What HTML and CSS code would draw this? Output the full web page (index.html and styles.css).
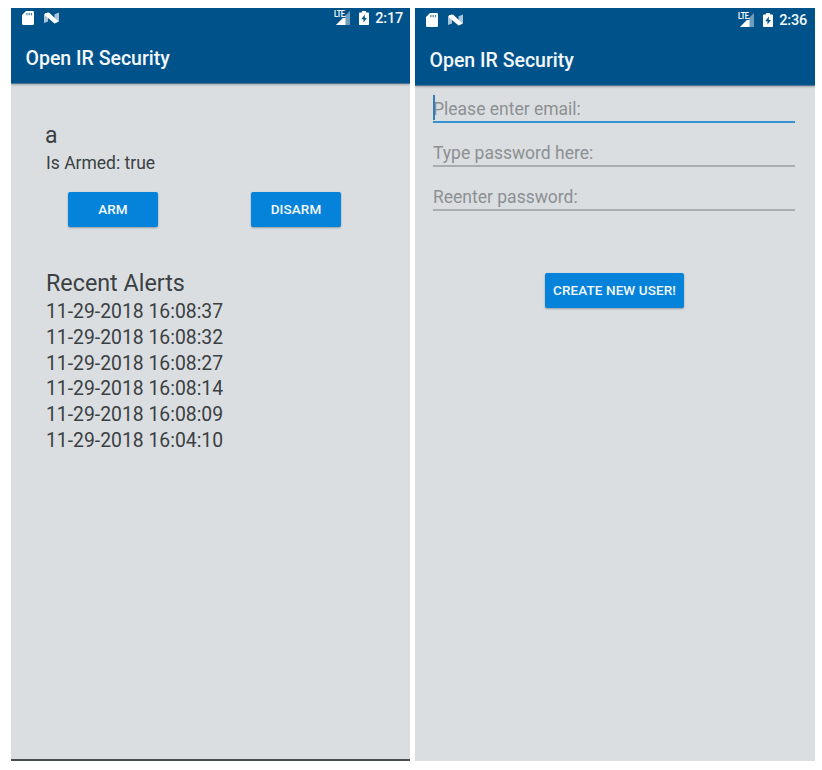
FILE: index.html
```
<!DOCTYPE html>
<html lang="en">
<head>
<meta charset="utf-8">
<title>Open IR Security</title>
<link rel="stylesheet" href="styles.css">
</head>
<body>
<svg class="symbols" aria-hidden="true">
  <symbol id="sd" viewBox="0 0 12 14"><path fill="#fff" d="M4 0h6.800a1.200 1.200 0 0 1 1.200 1.200v11.600a1.200 1.200 0 0 1-1.200 1.200H1.200A1.200 1.200 0 0 1 0 12.800V4z"/><path fill="#00538a" fill-opacity=".75" d="M4.300 2h1.200v2.300H4.300zM6.600 2h1.200v2.300H6.600zM8.900 2h1.200v2.300H8.900z"/></symbol>
  <symbol id="nougat" viewBox="0 0 15 12"><path fill="#a8c5da" d="M0 2l4-1.500v9L0 11zM10.500 2.200L15 .5v9l-4.500 2z"/><path fill="#fff" d="M1 1.200L5 .5L14.500 9.500L10.500 11.500L1 3.500z"/></symbol>
  <symbol id="signal" viewBox="0 0 18 16"><path fill="#6e9dbd" d="M17 1v14H3z"/><path fill="#fff" d="M12.500 5.500V15H3z"/></symbol>
  <symbol id="battery" viewBox="0 0 10 14"><path fill="#fff" d="M3 0h4v1.500h2.300q.7 0 .7.700v11.100q0 .7-.7.700H.7q-.7 0-.7-.7V2.200q0-.7.700-.7H3z"/><path fill="#00538a" d="M5.800 3.500L2.300 8.200h2.200v3.300L7.900 7H5.800z"/></symbol>
</svg>
<main class="screens">
  <section class="phone phone-home">
    <header class="app-header">
      <div class="status">
        <svg class="sd"><use href="#sd"/></svg>
        <svg class="nougat"><use href="#nougat"/></svg>
        <span class="network"><svg class="signal"><use href="#signal"/></svg><span class="lte">LTE</span></span>
        <svg class="battery"><use href="#battery"/></svg>
        <span class="clock">2:17</span>
      </div>
      <h1>Open IR Security</h1>
    </header>
    <div class="home">
      <h2 class="device">a</h2>
      <p class="armed">Is Armed: true</p>
      <div class="actions">
        <button type="button">ARM</button>
        <button type="button">DISARM</button>
      </div>
      <h2 class="alerts-title">Recent Alerts</h2>
      <ul class="alerts">
        <li>11-29-2018 16:08:37</li>
        <li>11-29-2018 16:08:32</li>
        <li>11-29-2018 16:08:27</li>
        <li>11-29-2018 16:08:14</li>
        <li>11-29-2018 16:08:09</li>
        <li>11-29-2018 16:04:10</li>
      </ul>
    </div>
  </section>
  <section class="phone phone-signup">
    <header class="app-header">
      <div class="status">
        <svg class="sd"><use href="#sd"/></svg>
        <svg class="nougat"><use href="#nougat"/></svg>
        <span class="network"><svg class="signal"><use href="#signal"/></svg><span class="lte">LTE</span></span>
        <svg class="battery"><use href="#battery"/></svg>
        <span class="clock">2:36</span>
      </div>
      <h1>Open IR Security</h1>
    </header>
    <form class="signup">
      <div class="field focused"><span>Please enter email:</span></div>
      <div class="field"><span>Type password here:</span></div>
      <div class="field"><span>Reenter password:</span></div>
      <button type="button" class="create">CREATE NEW USER!</button>
    </form>
  </section>
</main>
</body>
</html>
```
FILE: styles.css
```
* { box-sizing: border-box; margin: 0; padding: 0; }
body { background: #fff; font-family: Roboto, "Liberation Sans", sans-serif; color: #3b4043; }
.symbols { display: none; }
.screens { display: flex; gap: 5px; padding: 8px 7px 9px 11px; }
.phone { height: 753px; background: #dadee1; overflow: hidden; }
.phone-home { width: 399px; border-bottom: 2px solid #484d51; }
.phone-signup { width: 400px; }
.app-header { height: 76px; background: #00538a; color: #f4f8fb; border-bottom: 1px solid #4a7594; box-shadow: 0 1px 2px rgba(0, 0, 0, .25); }
.phone-signup .app-header { height: 78px; padding-top: 2px; }
.status { display: flex; align-items: center; height: 20px; padding: 0 7px 0 11px; }
.sd { width: 12px; height: 14px; margin-right: 10px; }
.nougat { width: 15px; height: 12px; }
.network { position: relative; width: 18px; height: 16px; margin-left: auto; margin-right: 8px; }
.signal { display: block; width: 18px; height: 16px; }
.lte { position: absolute; left: 1px; top: 1px; font-size: 9px; line-height: 7px; font-weight: 700; letter-spacing: -.5px; text-shadow: 1px 1px 0 #00538a; transform: scaleX(.8); transform-origin: left; }
.battery { width: 10px; height: 14px; margin-right: 6px; }
.clock { padding-top: 1px; font-size: 14.500px; line-height: 20px; font-weight: 500; letter-spacing: -.2px; }
.phone-signup .status { padding-right: 8px; }
h1 { font-size: 19.500px; line-height: 24px; font-weight: 500; padding: 19px 0 0 14.500px; }
h2 { font-weight: 400; }
.home { padding: 38px 0 0 35px; }
.device { font-size: 23px; line-height: 28px; margin-left: -1px; }
.armed { font-size: 17.500px; line-height: 22px; margin-top: 2px; }
.actions { display: flex; gap: 93px; margin: 18px 0 0 22px; }
button { width: 90px; height: 35px; border: 0; border-radius: 2px; background: #0583da; color: #f3f9fd; font: 500 13.500px/35px Roboto, sans-serif; letter-spacing: .1px; box-shadow: 0 1px 2px rgba(0, 0, 0, .3); white-space: nowrap; }
.alerts-title { font-size: 23.300px; line-height: 28px; margin-top: 42px; }
.alerts { list-style: none; font-size: 19.350px; line-height: 25.800px; margin-top: 2px; }
.signup { display: flex; flex-direction: column; padding: 0 20px 0 18px; }
.field { height: 44px; padding-top: 19px; border-bottom: 2px solid #a9adb0; color: #8c9093; font-size: 17.500px; line-height: 22px; }
.focused { position: relative; height: 37px; padding-top: 12px; border-color: #3692d2; }
.focused::before { content: ""; position: absolute; left: 0; top: 9px; width: 2px; height: 25px; background: #347eb2; }
.create { width: 139px; margin: 62px 0 0 112px; }
```
